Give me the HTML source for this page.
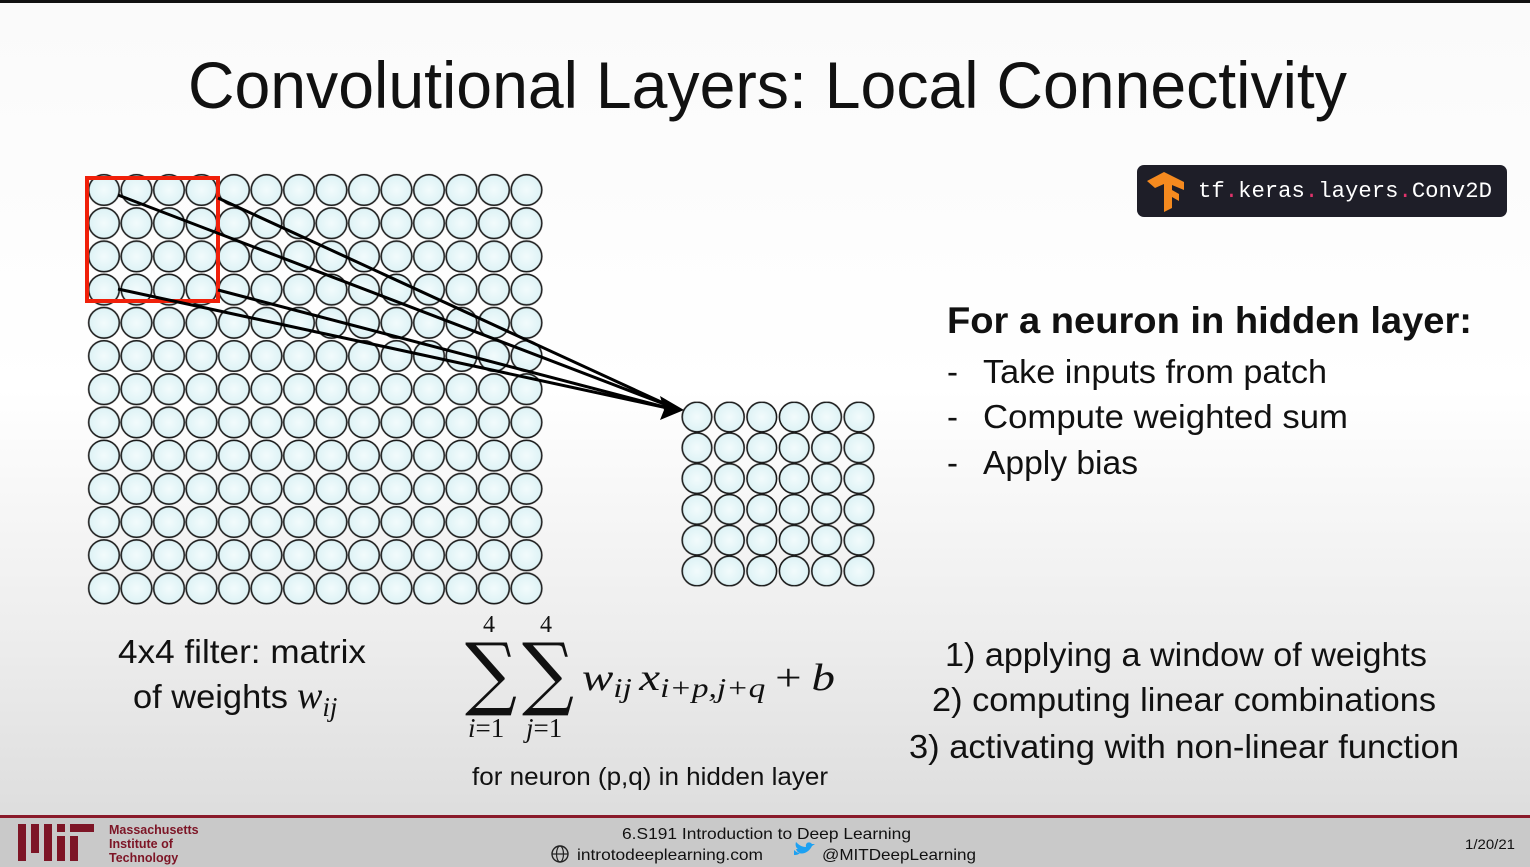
<!DOCTYPE html>
<html><head><meta charset="utf-8"><style>
html,body{margin:0;padding:0;width:1530px;height:867px;overflow:hidden;background:#fff}
svg{display:block}
text{font-family:"Liberation Sans",sans-serif;fill:#111}
</style></head><body>
<svg width="1530" height="867" viewBox="0 0 1530 867" xmlns="http://www.w3.org/2000/svg">
<defs>
<linearGradient id="bg" x1="0" y1="0" x2="0" y2="1">
<stop offset="0" stop-color="#fafafa"/><stop offset="0.45" stop-color="#ffffff"/><stop offset="0.75" stop-color="#ececec"/><stop offset="1" stop-color="#d9d9d9"/></linearGradient>
<radialGradient id="cf"><stop offset="0" stop-color="#f2fbfc"/><stop offset="1" stop-color="#ddf2f5"/></radialGradient>
<pattern id="big" x="87.75" y="173.4" width="32.5" height="33.2" patternUnits="userSpaceOnUse">
<circle cx="16.25" cy="16.6" r="15.3" fill="url(#cf)" stroke="#1a1a1a" stroke-width="1.6"/></pattern>
<pattern id="small" x="680.8" y="401.6" width="32.4" height="30.8" patternUnits="userSpaceOnUse">
<circle cx="16.2" cy="15.4" r="14.8" fill="url(#cf)" stroke="#1a1a1a" stroke-width="1.6"/></pattern>
</defs>
<rect width="1530" height="867" fill="url(#bg)"/>
<rect width="1530" height="3" fill="#111"/>
<text x="188" y="108" font-size="66" textLength="1159" lengthAdjust="spacingAndGlyphs">Convolutional Layers: Local Connectivity</text>

<rect x="87.75" y="173.4" width="455" height="432" fill="url(#big)"/>
<rect x="680.8" y="401.6" width="194.4" height="184.8" fill="url(#small)"/>
<rect x="87" y="178" width="131" height="123" fill="none" stroke="#f0200a" stroke-width="4"/>
<g stroke="#000" stroke-width="3">
<line x1="118" y1="195" x2="672" y2="407"/>
<line x1="218" y1="198" x2="672" y2="407"/>
<line x1="118" y1="289" x2="672" y2="409"/>
<line x1="218" y1="290" x2="672" y2="409"/>
</g>
<path d="M684,410 L660,396 L664,410 L660,420 Z" fill="#000"/>

<rect x="1137" y="165" width="370" height="52" rx="7" fill="#1e1e28"/>
<path d="M1147,181 L1164,172 L1184,182 L1184,190 L1172,185 L1172,190 L1179,194 L1179,201 L1172,197 L1172,208 L1164,212 L1164,184 L1155,188 Z" fill="#f58a1f"/>
<text x="1198" y="197" font-size="22" style="font-family:'Liberation Mono',monospace;fill:#fff" textLength="294" lengthAdjust="spacingAndGlyphs">tf<tspan fill="#e0336b">.</tspan>keras<tspan fill="#e0336b">.</tspan>layers<tspan fill="#e0336b">.</tspan>Conv2D</text>

<text x="947" y="333" font-size="37" textLength="525" lengthAdjust="spacingAndGlyphs" style="font-weight:600">For a neuron in hidden layer:</text>
<g font-size="33">
<text x="947" y="383">-</text><text x="983" y="383" textLength="344" lengthAdjust="spacingAndGlyphs">Take inputs from patch</text>
<text x="947" y="428">-</text><text x="983" y="428" textLength="365" lengthAdjust="spacingAndGlyphs">Compute weighted sum</text>
<text x="947" y="474">-</text><text x="983" y="474" textLength="155" lengthAdjust="spacingAndGlyphs">Apply bias</text>
<text x="945" y="666" textLength="482" lengthAdjust="spacingAndGlyphs">1) applying a window of weights</text>
<text x="932" y="711" textLength="504" lengthAdjust="spacingAndGlyphs">2) computing linear combinations</text>
<text x="909" y="758" textLength="550" lengthAdjust="spacingAndGlyphs">3) activating with non-linear function</text>
<text x="118" y="663" textLength="248" lengthAdjust="spacingAndGlyphs">4x4 filter: matrix</text>
<text x="133" y="708" textLength="155" lengthAdjust="spacingAndGlyphs">of weights</text>
</g>
<text x="297" y="708" font-size="38" font-style="italic" style="font-family:'Liberation Serif',serif">w<tspan font-size="27" dy="8">ij</tspan></text>

<text x="483" y="632" font-size="24" style="font-family:'Liberation Serif',serif">4</text>
<text x="540" y="632" font-size="24" style="font-family:'Liberation Serif',serif">4</text>
<text x="465" y="700" font-size="80" style="font-family:'DejaVu Serif',serif" textLength="52" lengthAdjust="spacingAndGlyphs">∑</text>
<text x="522" y="700" font-size="80" style="font-family:'DejaVu Serif',serif" textLength="52" lengthAdjust="spacingAndGlyphs">∑</text>
<text x="468" y="737" font-size="27" style="font-family:'Liberation Serif',serif"><tspan font-style="italic">i</tspan>=1</text>
<text x="526" y="737" font-size="27" style="font-family:'Liberation Serif',serif"><tspan font-style="italic">j</tspan>=1</text>
<text x="582" y="690" font-size="38" font-style="italic" style="font-family:'Liberation Serif',serif" textLength="253" lengthAdjust="spacingAndGlyphs">w<tspan font-size="27" dy="7">ij</tspan><tspan dy="-7" dx="6">x</tspan><tspan font-size="27" dy="7">i+p,j+q</tspan><tspan dy="-7" dx="8" font-style="normal">+</tspan><tspan dx="8">b</tspan></text>
<text x="472" y="785" font-size="25" textLength="356" lengthAdjust="spacingAndGlyphs">for neuron (p,q) in hidden layer</text>

<rect x="0" y="816" width="1530" height="51" fill="#c9c9c9"/>
<rect x="0" y="815" width="1530" height="3" fill="#8a1a2a"/>
<g fill="#7d1526">
<rect x="18" y="824" width="8" height="37"/><rect x="31" y="824" width="8" height="29"/><rect x="44" y="824" width="8" height="37"/>
<rect x="57" y="824" width="8" height="8"/><rect x="57" y="836" width="8" height="25"/><rect x="70" y="824" width="24" height="8"/><rect x="70" y="836" width="8" height="25"/>
</g>
<g font-size="12.5" font-weight="bold">
<text x="109" y="834" style="fill:#7d1526">Massachusetts</text>
<text x="109" y="848" style="fill:#7d1526">Institute of</text>
<text x="109" y="862" style="fill:#7d1526">Technology</text>
</g>
<text x="622" y="839" font-size="16" textLength="289" lengthAdjust="spacingAndGlyphs">6.S191 Introduction to Deep Learning</text>
<circle cx="560" cy="854" r="8" fill="none" stroke="#222" stroke-width="1.4"/>
<ellipse cx="560" cy="854" rx="3.5" ry="8" fill="none" stroke="#222" stroke-width="1.2"/>
<line x1="552" y1="854" x2="568" y2="854" stroke="#222" stroke-width="1.2"/>
<text x="577" y="860" font-size="16" textLength="186" lengthAdjust="spacingAndGlyphs">introtodeeplearning.com</text>
<path d="M794,850 C800,856 808,854 812,846 L815,844 L812,844 C810,841 805,842 806,847 C801,847 798,844 796,842 C795,845 796,848 798,849 L796,849 C797,852 799,853 800,853 C798,855 796,855 794,855 Z" fill="#1da1f2"/>
<text x="822" y="860" font-size="16" textLength="154" lengthAdjust="spacingAndGlyphs">@MITDeepLearning</text>
<text x="1465" y="849" font-size="14" textLength="50" lengthAdjust="spacingAndGlyphs">1/20/21</text>
</svg>
</body></html>
